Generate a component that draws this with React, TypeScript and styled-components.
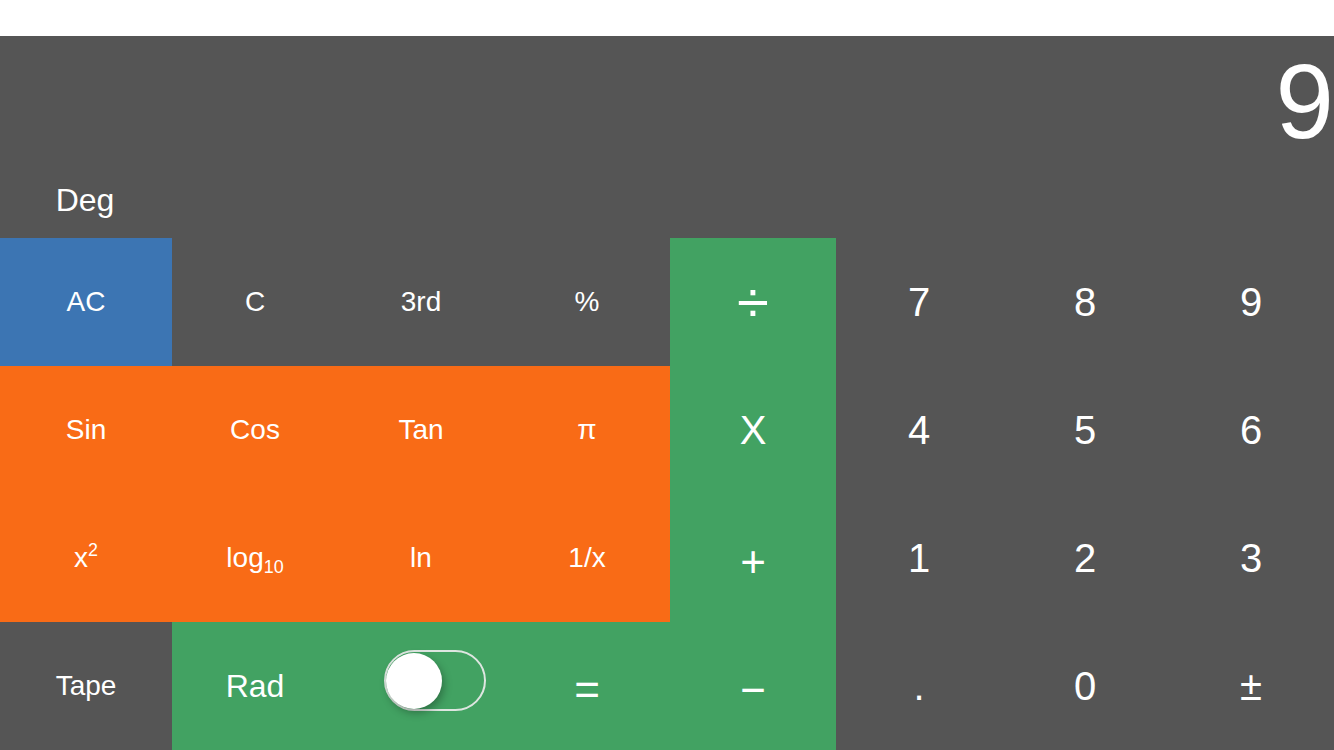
import React, { useState } from "react";
import styled, { createGlobalStyle } from "styled-components";

type Tone = "gray" | "blue" | "orange" | "green";
type Size = "sm" | "rad" | "md" | "lg" | "xl";

const COLORS: Record<Tone, string> = {
  gray: "#555555",
  blue: "#3c75b3",
  orange: "#f96b16",
  green: "#42a262",
};

type KeyDef = {
  label: React.ReactNode;
  tone: Tone;
  size?: Size;
  toggle?: boolean;
};

// styled parts live at the bottom, so the key list is built at render time
const buildKeys = (): KeyDef[] => [
  { label: "AC", tone: "blue" },
  { label: "C", tone: "gray" },
  { label: "3rd", tone: "gray" },
  { label: "%", tone: "gray" },
  { label: "÷", tone: "green", size: "xl" },
  { label: "7", tone: "gray", size: "md" },
  { label: "8", tone: "gray", size: "md" },
  { label: "9", tone: "gray", size: "md" },

  { label: "Sin", tone: "orange" },
  { label: "Cos", tone: "orange" },
  { label: "Tan", tone: "orange" },
  { label: "π", tone: "orange" },
  { label: "X", tone: "green", size: "md" },
  { label: "4", tone: "gray", size: "md" },
  { label: "5", tone: "gray", size: "md" },
  { label: "6", tone: "gray", size: "md" },

  { label: <>x<Sup>2</Sup></>, tone: "orange" },
  { label: <>log<Sub>10</Sub></>, tone: "orange" },
  { label: "ln", tone: "orange" },
  { label: "1/x", tone: "orange" },
  { label: "+", tone: "green", size: "lg" },
  { label: "1", tone: "gray", size: "md" },
  { label: "2", tone: "gray", size: "md" },
  { label: "3", tone: "gray", size: "md" },

  { label: "Tape", tone: "gray" },
  { label: "Rad", tone: "green", size: "rad" },
  { label: "", tone: "green", toggle: true },
  { label: "=", tone: "green", size: "lg" },
  { label: "−", tone: "green", size: "lg" },
  { label: ".", tone: "gray", size: "md" },
  { label: "0", tone: "gray", size: "md" },
  { label: "±", tone: "gray", size: "md" },
];

const App = () => {
  const [rad, setRad] = useState(false);
  const keys = buildKeys();

  return (
    <>
      <GlobalStyle />
      <StatusBar />
      <Calculator>
        <Display>9</Display>
        <ModeRow>
          <ModeLabel>Deg</ModeLabel>
        </ModeRow>
        <Keypad>
          {keys.map((k, i) => (
            <Key key={i} type="button" $tone={k.tone} $size={k.size || "sm"}>
              {k.toggle ? (
                <Switch $on={rad} onClick={() => setRad((p) => !p)}>
                  <Knob $on={rad} />
                </Switch>
              ) : (
                <Label>{k.label}</Label>
              )}
            </Key>
          ))}
        </Keypad>
      </Calculator>
    </>
  );
};

export default App;

const GlobalStyle = createGlobalStyle`
  html, body {
    margin: 0;
    padding: 0;
    background: #ffffff;
    font-family: "Liberation Sans", Arial, Helvetica, sans-serif;
    overflow: hidden;
  }
`;

const StatusBar = styled.div`
  height: 36px;
  background: #ffffff;
`;

const Calculator = styled.div`
  display: flex;
  flex-direction: column;
  height: 714px;
  background: #555555;
  color: #ffffff;
`;

const Display = styled.div`
  height: 126px;
  box-sizing: border-box;
  padding-top: 13px;
  text-align: right;
  font-size: 105px;
  line-height: 105px;
`;

const ModeRow = styled.div`
  display: flex;
  align-items: center;
  height: 76px;
`;

const ModeLabel = styled.span`
  width: 170px;
  text-align: center;
  font-size: 32px;
`;

const Keypad = styled.div`
  display: grid;
  grid-template-columns: 172px repeat(7, 166px);
  grid-auto-rows: 128px;
`;

const sizes: Record<Size, string> = {
  sm: "28px",
  rad: "32px",
  md: "40px",
  lg: "44px",
  xl: "58px",
};

const Key = styled.button<{ $tone: Tone; $size: Size }>`
  display: flex;
  align-items: center;
  justify-content: center;
  border: none;
  margin: 0;
  padding: ${({ $size }) => ($size === "lg" ? "9px 0 0" : "0")};
  background: ${({ $tone }) => COLORS[$tone]};
  color: #ffffff;
  font-family: inherit;
  font-size: ${({ $size }) => sizes[$size]};
  cursor: pointer;
`;

const Label = styled.span`
  display: inline-block;
  line-height: 1.15;
  white-space: nowrap;
`;

const Sup = styled.sup`
  font-size: 0.64em;
  vertical-align: 0.62em;
  line-height: 0;
`;

const Sub = styled.sub`
  font-size: 0.64em;
  vertical-align: -0.32em;
  line-height: 0;
`;

const Switch = styled.span<{ $on: boolean }>`
  position: relative;
  display: block;
  width: 102px;
  height: 61px;
  box-sizing: border-box;
  margin: 0 0 12px 28px;
  border: 2px solid rgba(236, 236, 236, 0.92);
  border-radius: 31px;
  background: ${({ $on }) => ($on ? "#4cd964" : "transparent")};
`;

const Knob = styled.span<{ $on: boolean }>`
  position: absolute;
  top: 1px;
  left: ${({ $on }) => ($on ? "41px" : "0px")};
  width: 56px;
  height: 56px;
  border-radius: 50%;
  background: #ffffff;
  box-shadow: 2px 4px 8px rgba(0, 0, 0, 0.3);
`;
